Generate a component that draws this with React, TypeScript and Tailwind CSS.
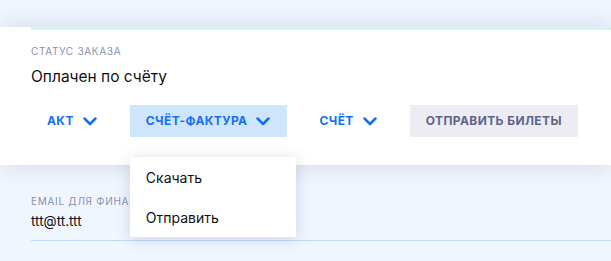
import React from 'react';

const ACTIONS = [
  { label: 'Акт', open: false },
  { label: 'Счёт-фактура', open: true },
  { label: 'Счёт', open: false },
];

function Chevron() {
  return (
    <svg width="16" height="16" viewBox="0 0 16 16" fill="none" className="shrink-0">
      <path d="M2.5 5.5 L8 11 L13.5 5.5" stroke="#1570ef" strokeWidth="2.5" strokeLinecap="round" strokeLinejoin="round" />
    </svg>
  );
}

export default function App() {
  return (
    <div
      className="relative h-[261px] w-[611px] overflow-hidden bg-[#f0f6fd] pt-[27px]"
      style={{ fontFamily: 'Inter, "Noto Sans", sans-serif' }}
    >
      <div className="relative z-10 bg-white shadow-[0_0_22px_rgba(40,60,120,0.16)]">
        <div className="ml-[31px] h-[3px] bg-[#d2f6ef]" />
        <div className="pl-[31px] pt-[15px] pb-[28px]">
          <p className="text-[10px] leading-[12px] uppercase tracking-[0.7px] text-[#8b8fae]">Статус заказа</p>
          <p className="mt-2 text-[15.5px] leading-6 text-[#111]">Оплачен по счёту</p>
          <div className="mt-4 flex gap-4 whitespace-nowrap">
            {ACTIONS.map((a) => (
              <div key={a.label} className="relative shrink-0">
                <button
                  className={`flex h-8 items-center gap-2 px-4 text-[12px] font-bold uppercase tracking-[0.4px] text-[#1570ef] ${
                    a.open ? 'bg-[#cfe5fb]' : ''
                  }`}
                >
                  {a.label}
                  <Chevron />
                </button>
                {a.open && (
                  <div className="absolute left-0 top-[52px] w-[166px] bg-white shadow-[0_2px_14px_rgba(40,60,120,0.18)]">
                    <div className="flex h-10 items-center px-4 text-[14px] text-[#111]">Скачать</div>
                    <div className="flex h-10 items-center px-4 text-[14px] text-[#111]">Отправить</div>
                  </div>
                )}
              </div>
            ))}
            <button className="flex h-8 shrink-0 items-center bg-[#ebedf3] px-4 text-[12px] font-bold uppercase tracking-[0.4px] text-[#5f6488]">
              Отправить билеты
            </button>
          </div>
        </div>
      </div>

      <div className="pl-[31px] pt-[30px]">
        <p className="whitespace-nowrap text-[10px] leading-[12px] uppercase tracking-[0.7px] text-[#8b8fae]">Email для финансовых документов</p>
        <div className="mt-1 border-b border-[#bcdcf6] pb-[9px]">
          <p className="text-[13.5px] leading-5 text-[#111]">ttt@tt.ttt</p>
        </div>
      </div>
    </div>
  );
}
